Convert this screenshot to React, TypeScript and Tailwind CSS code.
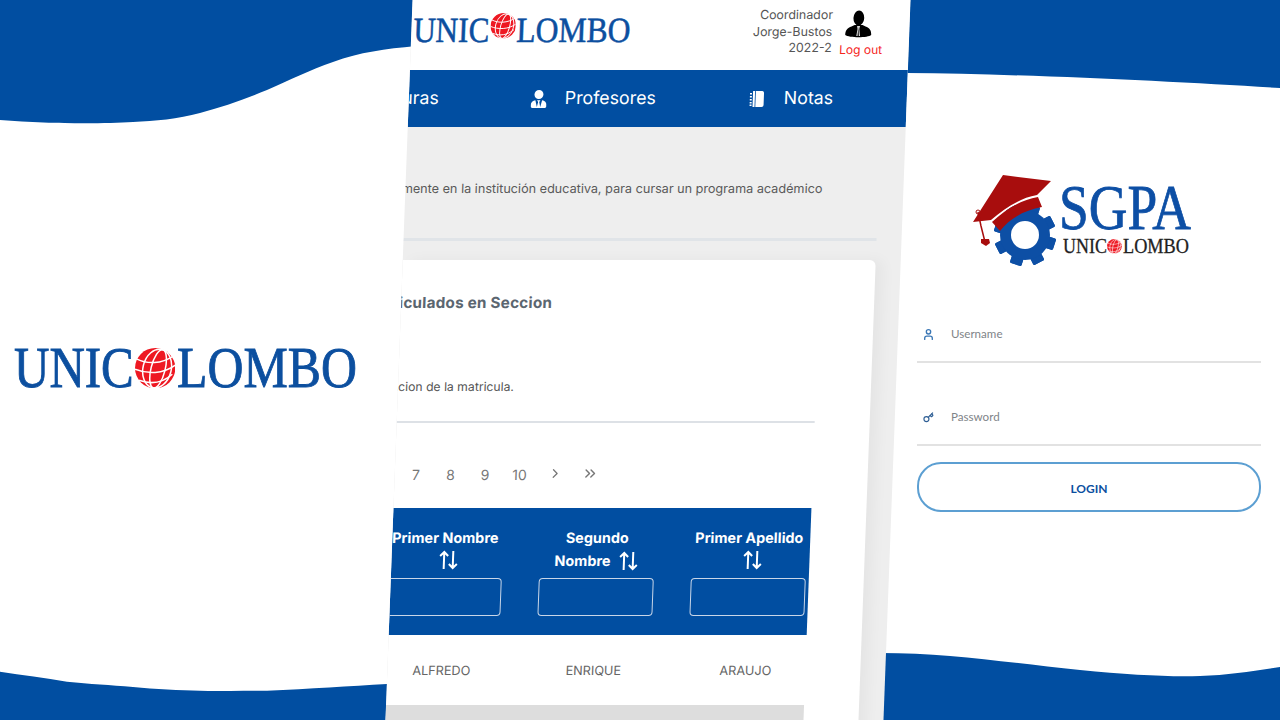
import { ChevronRight, ChevronsRight, Key, User } from "lucide-react";
import { FaUserTie } from "react-icons/fa";

const Globe = ({ className }: { className: string }) => (
  <svg viewBox="0 0 40 40" className={className}>
    <circle cx="20" cy="20" r="20" fill="#ee1822" />
    <g fill="none" stroke="#fff" strokeWidth="1.5">
      <ellipse cx="23" cy="20" rx="7" ry="19.5" transform="rotate(14 20 20)" />
      <ellipse cx="22" cy="20" rx="14" ry="19.5" transform="rotate(14 20 20)" />
      <path d="M2 11c10 5 24 5 36-3" />
      <path d="M0 21c12 5 28 5 40-4" />
      <path d="M4 32c11 4 23 3 33-6" />
    </g>
  </svg>
);

// sizes in em, the wrapper sets the font size
const Logo = ({ className }: { className: string }) => (
  <div className={`flex items-center font-['Liberation_Serif',serif] leading-none [-webkit-text-stroke:0.015em] ${className}`}>
    <span className="block w-[2.16em] shrink-0 origin-left scale-x-[0.875] whitespace-nowrap">UNIC</span>
    <Globe className="w-[0.72em] h-[0.72em] shrink-0" />
    <span className="block w-[3.2em] shrink-0 ml-[0.03em] origin-left scale-x-[0.89] whitespace-nowrap">LOMBO</span>
  </div>
);

const SortArrows = () => (
  <svg viewBox="0 0 20 20" className="w-[20px] h-[20px]" fill="none" stroke="#fff" strokeWidth="2">
    <path d="M5.5 19V2M1.5 6l4-4 4 4" />
    <path d="M14.5 1v17M10.5 14l4 4 4-4" />
  </svg>
);

const NotebookIcon = () => (
  <svg viewBox="0 0 16 16" className="w-[16px] h-[16px]" fill="#fff">
    <path d="M4 0h9a2 2 0 0 1 2 2v12a2 2 0 0 1-2 2H4z" />
    <path d="M1 2h2v1.4H1zM1 5h2v1.4H1zM1 8h2v1.4H1zM1 11h2v1.4H1zM1 13.6h2V15H1z" />
    <path d="M6 0h.8v16H6z" fill="#014ea1" />
  </svg>
);

const Avatar = () => (
  <svg viewBox="0 0 28 28" className="w-[28px] h-[28px] mr-[6px]">
    <ellipse cx="14" cy="8" rx="5.4" ry="7.5" fill="#000" />
    <path d="M1 25c0-5 2-7 6-8.500l3-1.500h8l3 1.500c4 1.500 6 3.500 6 8.500-3 3-22 3-26 0z" fill="#000" />
    <path d="M12.500 16h3l-.6 3 1 7h-3.800l1-7z" fill="#d8d8d8" />
    <path d="M14 17l-.6 9h1.200z" fill="#000" />
  </svg>
);

const SgpaLogo = () => (
  <div className="flex items-start">
    <svg viewBox="0 0 110 110" className="w-[110px] h-[110px] shrink-0 -mr-[11px]">
      <g fill="#0d4fa5">
        {[0, 45, 90, 135, 180, 225, 270, 315].map((deg) => (
          <rect key={deg} x="59" y="44" width="12" height="62" rx="1.500" transform={`rotate(${deg + 18} 65 75)`} />
        ))}
        <circle cx="65" cy="75" r="25" />
      </g>
      <circle cx="65" cy="75" r="14" fill="#fff" />
      <path d="M29 66 C43 50 60 40 78 37 L84 47 L92 47 L92 8 L29 8z" fill="#fff" />
      <path d="M32 62 C45 50 60 40 78 37 L82 47 C65 50 50 58 40 71z" fill="#a80d0d" />
      <path d="M43 15 L91 21 L77 35 C60 38 45 48 31 60 L13 62z" fill="#a80d0d" />
      <path d="M18 52 L21 66 L25 82" fill="none" stroke="#a80d0d" strokeWidth="1.500" />
      <circle cx="18" cy="52" r="2" fill="none" stroke="#a80d0d" />
      <path d="M21 79h8l1 4-4 3-5-3z" fill="#a80d0d" />
    </svg>
    <div className="flex flex-col pt-[23px]">
      <div className="h-[50px] w-[131px] overflow-visible">
        <span className="block origin-left scale-x-[0.85] whitespace-nowrap font-['Liberation_Serif',serif] text-[63px] leading-[50px] text-[#0d4fa5] [-webkit-text-stroke:0.012em]">
          SGPA
        </span>
      </div>
      <Logo className="text-[20.5px] text-[#222] mt-[3px] ml-[4px]" />
    </div>
  </div>
);

const headers = [
  { key: "a", top: "Primer Nombre", bottom: null },
  { key: "b", top: "Segundo", bottom: "Nombre" },
  { key: "c", top: "Primer Apellido", bottom: null },
];

const names = ["ALFREDO", "ENRIQUE", "ARAUJO"];

const pages = ["7", "8", "9", "10"];

export default function App() {
  return (
    <div className="flex w-[1280px] h-[720px] overflow-hidden bg-white font-['Inter',sans-serif]">
      {/* left slide */}
      <div className="flex flex-col w-[416px] h-[720px] shrink-0">
        <svg viewBox="0 0 416 124" className="w-[416px] h-[124px] shrink-0" fill="#014ea1">
          <path d="M0 0H416V46C385 49 360 52 333 62 310 70 290 80 267 90 245 99 222 107 200 113 178 119 155 121 133 122 100 124 50 124 0 120Z" />
        </svg>
        <div className="flex-1 pt-[216px] pl-[14px]">
          <Logo className="text-[56px] text-[#0c4f9f]" />
        </div>
        <svg viewBox="0 0 416 50" className="w-[416px] h-[50px] shrink-0" fill="#014ea1">
          <path d="M0 1.700C22 5 45 8 67 11.700 90 14 110 15 133 17 155 19 180 20.500 200 20.700 225 21.200 245 21 267 20.700 310 19 350 16 387 14L416 13V50H0Z" />
        </svg>
      </div>

      {/* middle slide, sheared like the original collage */}
      <div className="relative z-10 -ml-[17.5px] w-[498px] h-[720px] shrink-0 -skew-x-[2.15deg] overflow-hidden bg-[#eeeeee]">
        <div className="flex h-[70px] bg-white">
          <Logo className="text-[35.5px] text-[#0c4f9f] pl-[2px] pt-[13px] items-start" />
          <div className="flex-1" />
          <div className="w-[120px] pt-[7px] text-right text-[12.4px] leading-[16.500px] text-[#555]">
            <p>Coordinador</p>
            <p>Jorge-Bustos</p>
            <p>2022-2</p>
          </div>
          <div className="flex flex-col items-center w-[52px] ml-[3px] mr-[22px] pt-[10px]">
            <Avatar />
            <span className="mt-[4px] whitespace-nowrap text-[12px] leading-[16px] text-[#f5241c]">Log out</span>
          </div>
        </div>

        <nav className="flex items-center h-[57px] bg-[#014ea1] text-white text-[17.8px]">
          <div className="flex justify-end w-[30px] shrink-0 whitespace-nowrap">Asignaturas</div>
          <div className="flex items-center ml-[92px] w-[218px] shrink-0">
            <FaUserTie className="w-[16px] h-[18px]" />
            <span className="ml-[18px]">Profesores</span>
          </div>
          <div className="flex items-center">
            <NotebookIcon />
            <span className="ml-[19px]">Notas</span>
          </div>
        </nav>

        <div className="flex justify-end w-[417px] mt-[52px] h-[20px] whitespace-nowrap text-[12.65px] leading-[20px] text-[#5a5a5a]">
          Estudiante: persona matriculada formalmente en la institución educativa, para cursar un programa académico
        </div>
        <div className="w-[473px] h-[3px] mt-[39px] bg-[#e0e4e8]" />

        <div className="w-[473px] h-[480px] mt-[19px] rounded-tr-[6px] bg-white shadow-[8px_0_14px_rgba(0,0,0,0.04)] pt-[31px]">
          <h2 className="flex justify-end w-[151px] h-[24px] whitespace-nowrap text-[15.3px] font-bold leading-[24px] tracking-[0.2px] text-[#5b6670]">
            Estudiantes Matriculados en Seccion
          </h2>
          <p className="flex justify-end w-[116px] h-[20px] mt-[62px] whitespace-nowrap text-[12.2px] leading-[20px] text-[#555]">
            Fecha de legalizacion de la matricula.
          </p>
          <div className="w-[418px] h-[2px] mt-[24px] bg-[#dde1e6]" />

          <div className="flex items-center h-[24px] mt-[39px] pl-[4px] text-[14px] text-[#777]">
            {pages.map((p) => (
              <span key={p} className="w-[34.5px] text-center">
                {p}
              </span>
            ))}
            <ChevronRight className="w-[15px] h-[15px] ml-[11px] -mt-[2px]" />
            <ChevronsRight className="w-[17px] h-[17px] ml-[19px] -mt-[2px]" />
          </div>

          <div className="w-[417.5px] h-[127px] mt-[22px] overflow-hidden bg-[#014ea1]">
            <div className="grid grid-cols-3 w-[456px] -ml-[23px]">
              {headers.map((h) => (
                <div key={h.key} className="flex flex-col items-center">
                  <div className="flex flex-col items-center h-[70px] pt-[18px] text-[14.4px] font-bold leading-[23px] text-white whitespace-nowrap">
                    <span>{h.top}</span>
                    {h.bottom ? (
                      <span className="flex items-center gap-[8px]">
                        {h.bottom} <SortArrows />
                      </span>
                    ) : (
                      <span className="block ml-[8px] mt-[1px]">
                        <SortArrows />
                      </span>
                    )}
                  </div>
                  <div className="w-[115px] h-[38px] rounded-[4px] border border-[#c9d6e8]" />
                </div>
              ))}
            </div>
          </div>

          <div className="grid grid-cols-3 items-center w-[456px] h-[70px] pt-[2px] -ml-[22px] text-center text-[12.7px] text-[#666]">
            {names.map((n) => (
              <span key={n}>{n}</span>
            ))}
          </div>
          <div className="w-[417.5px] h-[20px] bg-[#dddddd]" />
        </div>
      </div>

      {/* right slide */}
      <div className="flex flex-col w-[400px] h-[720px] shrink-0 -ml-[16.5px]">
        <svg viewBox="0 0 400 90" className="w-[400px] h-[90px] shrink-0" fill="#014ea1">
          <path d="M0 0H400V88C300 82 150 74 27 73L0 72Z" />
        </svg>
        <div className="flex-1 pl-[37px] font-['Lato',sans-serif]">
          <div className="pl-[43px] pt-[70px] h-[216px]">
            <SgpaLogo />
          </div>
          <div className="w-[344px]">
            <div className="flex items-center h-[57px] pt-[1px] border-b-2 border-[#e2e2e2]">
              <User className="w-[13px] h-[13px] ml-[5px] text-[#3a77b5]" strokeWidth={2.5} />
              <span className="ml-[16px] text-[11.6px] text-[#808488]">Username</span>
            </div>
            <div className="flex items-center h-[83px] border-b-2 border-[#e2e2e2] pb-[1px] pt-[28px]">
              <Key className="w-[11px] h-[11px] ml-[6px] text-[#2f5f95]" strokeWidth={2.5} />
              <span className="ml-[17px] text-[11.6px] text-[#808488]">Password</span>
            </div>
            <button className="flex items-center justify-center w-[344px] h-[50px] mt-[16px] pt-[3px] rounded-[24px] border-2 border-[#5c9fd2] text-[12px] font-bold text-[#0c4f9f]">
              LOGIN
            </button>
          </div>
        </div>
        <svg viewBox="0 0 400 68" className="w-[400px] h-[68px] shrink-0" fill="#014ea1">
          <path d="M0 1C70 1 130 11 200 18 250 23 290 25 320 24 350 23 375 19 400 15V68H0Z" />
        </svg>
      </div>
    </div>
  );
}
